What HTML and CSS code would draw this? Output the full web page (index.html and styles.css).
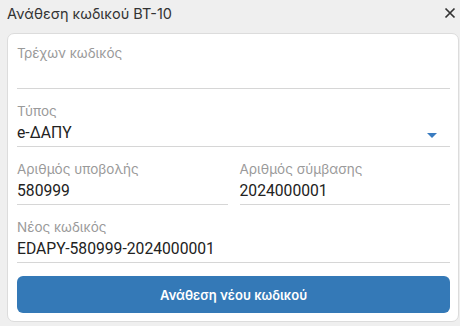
FILE: index.html
```html
<!DOCTYPE html>
<html lang="el">
<head>
  <meta charset="UTF-8">
  <meta name="viewport" content="width=device-width, initial-scale=1.0">
  <title>Ανάθεση κωδικού BT-10</title>
  <link rel="stylesheet" href="styles.css">
</head>
<body>
  <div class="dialog">
    <!-- Header -->
    <div class="dialog-header">
      <span class="dialog-title">Ανάθεση κωδικού BT-10</span>
      <button class="close-button" aria-label="Κλείσιμο">
        <svg width="12" height="12" viewBox="0 0 12 12">
          <path d="M1.5 1.5 L10.5 10.5 M10.5 1.5 L1.5 10.5" stroke="#333" stroke-width="1.7" fill="none"/>
        </svg>
      </button>
    </div>

    <!-- Form -->
    <div class="card">
      <div class="field">
        <div class="field-label">Τρέχων κωδικός</div>
        <div class="field-value"></div>
      </div>

      <div class="field">
        <div class="field-label">Τύπος</div>
        <div class="field-value select">
          <span>e-ΔΑΠΥ</span>
          <span class="caret"></span>
        </div>
      </div>

      <div class="field-row">
        <div class="field">
          <div class="field-label">Αριθμός υποβολής</div>
          <div class="field-value">580999</div>
        </div>
        <div class="field">
          <div class="field-label">Αριθμός σύμβασης</div>
          <div class="field-value">2024000001</div>
        </div>
      </div>

      <div class="field">
        <div class="field-label">Νέος κωδικός</div>
        <div class="field-value">EDAPY-580999-2024000001</div>
      </div>

      <button class="submit-button">Ανάθεση νέου κωδικού</button>
    </div>
  </div>
</body>
</html>
```

FILE: styles.css
```css
body {
  margin: 0;
  padding: 0;
  background-color: #efefef;
  font-family: Inter, "Noto Sans", sans-serif;
  color: #222;
}

.dialog {
  width: 460px;
  height: 326px;
}

.dialog-header {
  height: 33px;
  display: flex;
  align-items: center;
  justify-content: space-between;
  padding: 0 3px 0 7px;
  box-sizing: border-box;
}

.dialog-title {
  font-size: 14.5px;
  color: #333;
  margin-top: -7px;
}

.close-button {
  background: none;
  border: none;
  padding: 0;
  width: 14px;
  height: 14px;
  display: flex;
  align-items: center;
  justify-content: center;
  margin-top: -8px;
  cursor: pointer;
}

.card {
  margin: 0 1px 0 7px;
  background-color: #ffffff;
  border: 1px solid #dcdcdc;
  border-radius: 7px;
  padding: 10px 8px 8px 9px;
  display: flex;
  flex-direction: column;
  gap: 13px;
}

.field {
  display: flex;
  flex-direction: column;
  flex: 1;
  min-width: 0;
}

.field-label {
  font-size: 13.5px;
  line-height: 18px;
  color: #9a9a9a;
}

.field-value {
  font-family: Roboto, "Noto Sans", sans-serif;
  font-size: 15.7px;
  line-height: 26px;
  height: 26px;
  color: #222;
  border-bottom: 1px solid #d6d6d6;
}

.select {
  display: flex;
  align-items: center;
  justify-content: space-between;
}

.caret {
  width: 0;
  height: 0;
  border-left: 5px solid transparent;
  border-right: 5px solid transparent;
  border-top: 5px solid #3a7cc0;
  margin-right: 13px;
  margin-top: 4px;
}

.field-row {
  display: flex;
  gap: 12px;
}

.submit-button {
  height: 37px;
  border: none;
  border-radius: 6px;
  background-color: #3479b7;
  color: #ffffff;
  font-family: Inter, "Noto Sans", sans-serif;
  font-size: 13px;
  font-weight: 600;
  cursor: pointer;
}
```
